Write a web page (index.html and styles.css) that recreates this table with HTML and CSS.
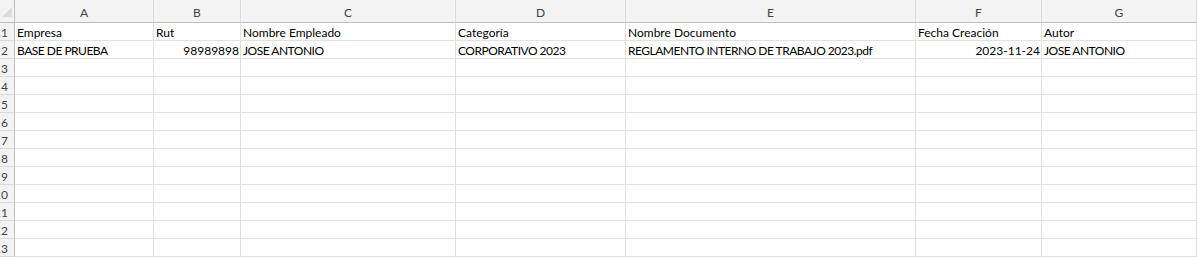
FILE: index.html
```html
<!DOCTYPE html>
<html lang="es">
<head>
    <meta charset="UTF-8">
    <meta name="viewport" content="width=device-width, initial-scale=1.0">
    <title>Documentos</title>
    <link rel="stylesheet" href="styles.css">
</head>
<body>
    <div class="sheet">
        <!-- column headers -->
        <div class="corner">
            <svg class="select-all" width="10" height="10" viewBox="0 0 10 10">
                <polygon points="10,0 10,10 0,10" fill="#dcdcdc"/>
            </svg>
        </div>
        <div class="col-head">A</div>
        <div class="col-head">B</div>
        <div class="col-head">C</div>
        <div class="col-head">D</div>
        <div class="col-head">E</div>
        <div class="col-head">F</div>
        <div class="col-head">G</div>

        <div class="row-head"><span>1</span></div>
        <div class="cell">Empresa</div>
        <div class="cell">Rut</div>
        <div class="cell">Nombre Empleado</div>
        <div class="cell">Categoría</div>
        <div class="cell">Nombre Documento</div>
        <div class="cell">Fecha Creación</div>
        <div class="cell">Autor</div>

        <div class="row-head"><span>2</span></div>
        <div class="cell caps">BASE DE PRUEBA</div>
        <div class="cell num">98989898</div>
        <div class="cell caps">JOSE ANTONIO</div>
        <div class="cell caps">CORPORATIVO 2023</div>
        <div class="cell caps">REGLAMENTO INTERNO DE TRABAJO 2023.pdf</div>
        <div class="cell num">2023-11-24</div>
        <div class="cell caps">JOSE ANTONIO</div>
    </div>

    <script>
        // empty rows 3..13
        const sheet = document.querySelector('.sheet');
        for (let r = 3; r <= 13; r++) {
            const head = document.createElement('div');
            head.className = 'row-head';
            head.innerHTML = '<span>' + r + '</span>';
            sheet.appendChild(head);
            for (let c = 0; c < 7; c++) {
                const cell = document.createElement('div');
                cell.className = 'cell';
                sheet.appendChild(cell);
            }
        }
    </script>
</body>
</html>
```

FILE: styles.css
```css
* {
    margin: 0;
    padding: 0;
    box-sizing: border-box;
}

body {
    font-family: 'Lato', 'Liberation Sans', sans-serif;
    font-size: 12px;
    background-color: #fff;
    color: #000;
    overflow: hidden;
}

.sheet {
    display: grid;
    grid-template-columns: 15px 139px 87px 215px 170px 290px 126px 1fr;
    grid-template-rows: 23px;
    grid-auto-rows: 18px;
}

.corner,
.col-head {
    background-color: #f3f3f3;
    border-right: 1px solid #dadada;
    border-bottom: 1px solid #bdbdbd;
}

.corner {
    display: flex;
    justify-content: flex-end;
    align-items: flex-end;
    padding: 0 2px 5px 0;
    border-right-color: #bdbdbd;
}

.col-head {
    color: #444;
    text-align: center;
    line-height: 26px;
}

.row-head {
    background-color: #f3f3f3;
    border-right: 1px solid #bdbdbd;
    border-bottom: 1px solid #dadada;
    overflow: hidden;
    color: #444;
}

/* the header column is scrolled, so only the last digit shows */
.row-head span {
    display: block;
    width: 40px;
    margin-left: -26px;
    padding-right: 6px;
    text-align: right;
    line-height: 19px;
}

.cell {
    border-right: 1px solid #e1e1e1;
    border-bottom: 1px solid #e1e1e1;
    padding: 0 2px;
    line-height: 19px;
    white-space: nowrap;
    overflow: hidden;
}

.cell.caps {
    letter-spacing: -0.5px;
}

.cell.num {
    text-align: right;
    padding-right: 1px;
}
```
